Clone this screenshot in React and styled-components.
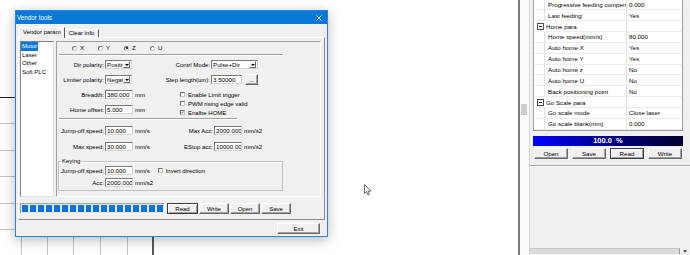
import React from 'react';
import styled, { createGlobalStyle, css } from 'styled-components';

const GlobalStyle = createGlobalStyle`
  html, body { margin: 0; padding: 0; background: #ffffff; }
  body { font-family: "Liberation Sans", Arial, sans-serif; color: #000; }
  * { box-sizing: border-box; }
`;

const Screen = styled.div`
  display: flex;
  width: 690px;
  height: 255px;
  overflow: hidden;
  background: #fff;
`;

const Workspace = styled.div`
  position: relative;
  flex: 1;
  background: #fff;
`;

const CanvasGrid = styled.svg`
  position: absolute;
  left: 0;
  top: 0;
`;

const Cursor = styled.svg`
  position: absolute;
  left: 364px;
  top: 184px;
`;

/* ---------- dialog window ---------- */

const Window = styled.div`
  position: absolute;
  left: 15px;
  top: 10px;
  width: 313px;
  height: 227px;
  display: flex;
  flex-direction: column;
  border: 1px solid #2a86d8;
  background: #f0f0f0;
  box-shadow: 0 3px 12px rgba(0, 0, 0, 0.28);
  font-size: 6px;
`;

const TitleBar = styled.div`
  display: flex;
  align-items: center;
  justify-content: space-between;
  height: 13px;
  padding: 0 5px 0 1px;
  background: #0a78d7;
  color: #fff;
  font-size: 6.3px;
`;

const WindowBody = styled.div`
  flex: 1;
  display: flex;
  flex-direction: column;
  padding: 3px 2px 2px 2px;
`;

const TabStrip = styled.div`
  display: flex;
  align-items: flex-end;
  height: 10px;
  padding-left: 1px;
`;

const Tab = styled.div`
  position: relative;
  height: ${p => (p.$active ? 11 : 8)}px;
  margin-bottom: ${p => (p.$active ? -1 : 0)}px;
  padding: ${p => (p.$active ? '1px 3px 0' : '0 4px 0 3px')};
  line-height: 7px;
  background: #f0f0f0;
  border: 1px solid;
  border-color: #fff #5a5a5a transparent #fff;
  border-bottom: none;
  white-space: nowrap;
  z-index: ${p => (p.$active ? 1 : 0)};
`;

const TabPage = styled.div`
  height: 183px;
  display: flex;
  flex-direction: column;
  padding: 3px 3px 4px 1px;
  border: 1px solid;
  border-color: #fff #8a8a8a #8a8a8a #fff;
`;

const MainArea = styled.div`
  display: flex;
  gap: 2px;
  height: 156px;
`;

const ListBox = styled.div`
  width: 34px;
  background: #fff;
  border: 1px solid;
  border-color: #828282 #e3e3e3 #e3e3e3 #828282;
`;

const ListItem = styled.div`
  width: fit-content;
  padding: 0 1px;
  line-height: 8.5px;
  white-space: nowrap;
  ${p => p.$selected && css`
    background: #0a78d7;
    color: #fff;
  `}
`;

const ParamPanel = styled.div`
  flex: 1;
  display: flex;
  flex-direction: column;
  border: 1px solid;
  border-color: #a0a0a0 #fff #fff #a0a0a0;
`;

const RadioRow = styled.div`
  display: flex;
  align-items: center;
  height: 8px;
  margin: 2px 0 0 15px;
`;

const RadioItem = styled.div`
  display: flex;
  align-items: center;
  gap: 3px;
  width: 26px;
`;

const Sep = styled.div`
  width: ${p => p.$w}px;
  height: 2px;
  margin: ${p => p.$top}px 0 0 2px;
  border-top: 1px solid #a0a0a0;
  border-bottom: 1px solid #fff;
`;

const Section = styled.div`
  display: flex;
  margin-top: 4px;
`;

const Column = styled.div`
  display: flex;
  flex-direction: column;
  gap: 6px;
  width: ${p => (p.$w ? `${p.$w}px` : 'auto')};
`;

const CheckList = styled.div`
  display: flex;
  flex-direction: column;
  margin-left: 20px;
`;

const MotionGrid = styled.div`
  display: grid;
  grid-template-columns: 103px auto;
  row-gap: 7px;
  margin-top: 6px;
`;

const Field = styled.div`
  display: flex;
  align-items: center;
  height: 9px;
  white-space: nowrap;
`;

const Label = styled.span`
  flex: none;
  width: ${p => p.$w}px;
  padding-right: 1px;
  text-align: right;
`;

const Input = styled.div`
  width: ${p => p.$w || 28}px;
  height: 9px;
  padding-left: 1px;
  line-height: 7px;
  font-size: 6.2px;
  background: #fff;
  border: 1px solid;
  border-color: #7a7a7a #d4d4d4 #d4d4d4 #7a7a7a;
  overflow: hidden;
  white-space: nowrap;
`;

const Unit = styled.span`
  margin-left: 2px;
`;

const SelectBox = styled.div`
  display: flex;
  align-items: center;
  width: ${p => p.$w}px;
  height: 9px;
  padding: 0 1px;
  background: #fff;
  border: 1px solid;
  border-color: #7a7a7a #d4d4d4 #d4d4d4 #7a7a7a;
`;

const SelectText = styled.span`
  flex: 1;
  overflow: hidden;
  line-height: 7px;
  font-size: 6.2px;
`;

const DropButton = styled.div`
  display: flex;
  align-items: center;
  justify-content: center;
  width: 7px;
  height: 7px;
  background: #f0f0f0;
  border: 1px solid;
  border-color: #fff #696969 #696969 #fff;
`;

const Arrow = styled.div`
  width: 0;
  height: 0;
  border-left: 2px solid transparent;
  border-right: 2px solid transparent;
  border-top: 2px solid #000;
`;

const CheckRow = styled.div`
  display: flex;
  align-items: center;
  gap: 3px;
  height: 9px;
  margin-left: ${p => p.$indent || 0}px;
  white-space: nowrap;
`;

const CheckBoxIcon = styled.div`
  display: flex;
  align-items: center;
  justify-content: center;
  width: 5px;
  height: 5px;
  background: #fff;
  border: 1px solid;
  border-color: #6d6d6d #c8c8c8 #c8c8c8 #6d6d6d;
`;

const RadioIcon = styled.div`
  display: flex;
  align-items: center;
  justify-content: center;
  width: 5px;
  height: 5px;
  border-radius: 50%;
  background: #fff;
  border: 1px solid;
  border-color: #6d6d6d #d0d0d0 #d0d0d0 #6d6d6d;
  &::after {
    content: '';
    display: ${p => (p.$checked ? 'block' : 'none')};
    width: 2px;
    height: 2px;
    border-radius: 50%;
    background: #000;
  }
`;

const KeyGroup = styled.fieldset`
  width: 225px;
  min-width: 0;
  margin: 7px 0 0 1px;
  padding: 0 0 3px 0;
  border: 1px solid #c0c0c0;
  box-shadow: inset 1px 1px 0 #fff;
`;

const Legend = styled.legend`
  margin-left: 2px;
  padding: 0 1px;
  line-height: 7px;
  font-size: 6px;
`;

const KeyRows = styled.div`
  display: flex;
  flex-direction: column;
  gap: 3px;
  margin-top: 1px;
`;

const ActionRow = styled.div`
  display: flex;
  gap: 1px;
  height: 11px;
  margin-top: 6px;
`;

const SegProgress = styled.div`
  display: flex;
  gap: 2px;
  width: 145px;
  margin-right: 1px;
  padding: 1px;
  background: #e6e6e6;
  border: 1px solid;
  border-color: #a0a0a0 #fff #fff #a0a0a0;
`;

const Segment = styled.div`
  width: 6px;
  background: #0a72d6;
`;

const Button = styled.div`
  display: flex;
  align-items: center;
  justify-content: center;
  width: ${p => p.$w}px;
  height: 11px;
  margin-left: ${p => p.$gap || 0}px;
  background: #f0f0f0;
  font-size: ${p => p.$fs || 6}px;
  border: 1px solid;
  border-color: #fff #696969 #696969 #fff;
  box-shadow: inset -1px -1px 0 #a0a0a0;
  ${p => p.$default && css`
    border-color: #3c3c3c;
    box-shadow: inset 1px 1px 0 #fff, inset -1px -1px 0 #a0a0a0;
  `}
`;

const FooterRow = styled.div`
  display: flex;
  justify-content: flex-end;
  margin-top: 3px;
  padding-right: 5px;
`;

/* ---------- right side panel ---------- */

const SidePanel = styled.div`
  display: flex;
  width: 172px;
  background: #f0f0f0;
`;

const EdgeStrip = styled.div`
  width: 12px;
  padding: 104px 0 0 1px;
  background: #fafafa;
  border-left: 2px solid #7d7d7d;
  border-right: 1px solid #d6d6d6;
`;

const Thumb = styled.div`
  width: 6px;
  height: 11px;
  background: #cdcdcd;
`;

const PanelBody = styled.div`
  flex: 1;
  display: flex;
  flex-direction: column;
  padding: 0 7px 0 3px;
  font-size: 6.2px;
`;

const PropGrid = styled.div`
  margin-top: -0.5px;
  background: #fff;
  border: 1px solid #a0a0a0;
  border-top: none;
`;

const PropRow = styled.div`
  display: grid;
  grid-template-columns: 10px 82px 1fr;
  height: 10.85px;
  border-bottom: 1px solid #ececec;
`;

const Gutter = styled.div`
  display: flex;
  align-items: center;
  justify-content: center;
  padding-left: 2px;
`;

const NameCell = styled.div`
  display: flex;
  align-items: center;
  min-width: 0;
  padding-left: ${p => (p.$group ? 2 : 3)}px;
  border-left: ${p => (p.$group ? 'none' : '1px solid #e2e2e2')};
  overflow: hidden;
  white-space: nowrap;
`;

const ValueCell = styled.div`
  display: flex;
  align-items: center;
  padding-left: 2px;
  border-left: 1px solid #e2e2e2;
  background: #fff;
  overflow: hidden;
  white-space: nowrap;
`;

const MinusBox = styled.div`
  display: flex;
  align-items: center;
  justify-content: center;
  width: 7px;
  height: 7px;
  border: 1px solid #4a4a4a;
  &::after {
    content: '';
    width: 3px;
    height: 1px;
    background: #222;
  }
`;

const PercentBar = styled.div`
  display: flex;
  align-items: center;
  justify-content: center;
  height: 10px;
  margin-top: 5px;
  background: linear-gradient(to right, #0000ff, #00007a 55%, #000030);
  color: #fff;
  font-weight: bold;
  font-size: 7.5px;
  white-space: pre;
`;

const ButtonRow = styled.div`
  display: flex;
  gap: 4px;
  margin-top: 2px;
  padding-left: 1px;
`;

const Etched = styled.div`
  height: 2px;
  margin: 6px -7px 0 -3px;
  border-top: 1px solid #a0a0a0;
  border-bottom: 1px solid #fff;
`;

const Filler = styled.div`
  flex: 1;
`;

const BottomStrip = styled.div`
  display: flex;
  align-items: center;
  height: 6px;
  margin: 0 -7px 1px -3px;
`;

const StripBar = styled.div`
  flex: 1;
  height: 6px;
  background: #dcdcdc;
  border-top: 1px solid #c6c6c6;
  border-right: 1px solid #9a9a9a;
`;

const StripClose = styled.span`
  width: 10px;
  text-align: center;
  font-size: 6px;
  font-weight: bold;
  line-height: 6px;
`;

/* ---------- data ---------- */

const axes = [
  { id: 'X' },
  { id: 'Y' },
  { id: 'Z', checked: true },
  { id: 'U' },
];

const props = [
  { name: 'Progressive feeding compensation', value: '0.000' },
  { name: 'Last feeding', value: 'Yes' },
  { group: 'Home para' },
  { name: 'Home speed(mm/s)', value: '80.000' },
  { name: 'Auto home X', value: 'Yes' },
  { name: 'Auto home Y', value: 'Yes' },
  { name: 'Auto home z', value: 'No' },
  { name: 'Auto home U', value: 'No' },
  { name: 'Back positioning point', value: 'No' },
  { group: 'Go Scale para' },
  { name: 'Go scale mode', value: 'Close laser' },
  { name: 'Go scale blank(mm)', value: '0.000' },
];

function Select({ w, value }) {
  return (
    <SelectBox $w={w}>
      <SelectText>{value}</SelectText>
      <DropButton><Arrow /></DropButton>
    </SelectBox>
  );
}

function Check({ label, checked, indent }) {
  return (
    <CheckRow $indent={indent}>
      <CheckBoxIcon>
        {checked && (
          <svg width="5" height="5" viewBox="0 0 5 5">
            <polyline points="0.6,2.4 1.9,3.8 4.4,0.8" fill="none" stroke="#000" strokeWidth="1" />
          </svg>
        )}
      </CheckBoxIcon>
      <span>{label}</span>
    </CheckRow>
  );
}

function Grid() {
  const vx = [21, 47, 73, 100, 127];
  const hy = [123, 150, 176, 203, 229];
  return (
    <CanvasGrid width="518" height="255">
      {vx.map(x => <line key={x} x1={x + 0.5} y1="97" x2={x + 0.5} y2="255" stroke="#c4c4c4" />)}
      {hy.map(y => <line key={y} x1="0" y1={y + 0.5} x2="153" y2={y + 0.5} stroke="#c4c4c4" />)}
      <line x1="0" y1="97.5" x2="153" y2="97.5" stroke="#222" />
      <line x1="153" y1="97" x2="153" y2="255" stroke="#222" strokeWidth="1.5" />
    </CanvasGrid>
  );
}

function VendorDialog() {
  return (
    <Window>
      <TitleBar>
        <span>Vendor tools</span>
        <svg width="6" height="6" viewBox="0 0 6 6">
          <path d="M0.5 0.5 L5.5 5.5 M5.5 0.5 L0.5 5.5" stroke="#fff" strokeWidth="0.9" />
        </svg>
      </TitleBar>
      <WindowBody>
        <TabStrip>
          <Tab $active>Vendor param</Tab>
          <Tab>Clear info</Tab>
        </TabStrip>
        <TabPage>
          <MainArea>
            <ListBox>
              <ListItem $selected>Motor</ListItem>
              <ListItem>Laser</ListItem>
              <ListItem>Other</ListItem>
              <ListItem>Soft PLC</ListItem>
            </ListBox>
            <ParamPanel>
              <RadioRow>
                {axes.map(a => (
                  <RadioItem key={a.id}>
                    <RadioIcon $checked={a.checked} />
                    <span>{a.id}</span>
                  </RadioItem>
                ))}
              </RadioRow>
              <Sep $w={224} $top={2} />
              <Section>
                <Column $w={103}>
                  <Field><Label $w={48}>Dir polarity:</Label><Select w={27} value="Positive" /></Field>
                  <Field><Label $w={48}>Limiter polarity:</Label><Select w={27} value="Negative" /></Field>
                  <Field><Label $w={48}>Breadth:</Label><Input>380.000</Input><Unit>mm</Unit></Field>
                  <Field><Label $w={48}>Home offset:</Label><Input>5.000</Input><Unit>mm</Unit></Field>
                </Column>
                <Column>
                  <Field><Label $w={51}>Contrl Mode:</Label><Select w={47} value="Pulse+Dir" /></Field>
                  <Field>
                    <Label $w={51}>Step length(um):</Label>
                    <Input $w={31}>3.50000</Input>
                    <Button $w={13} $gap={3}>...</Button>
                  </Field>
                  <CheckList>
                    <Check label="Enable Limit trigger" />
                    <Check label="PWM rising edge valid" />
                    <Check label="Enalbe HOME" checked />
                  </CheckList>
                </Column>
              </Section>
              <Sep $w={178} $top={1} />
              <MotionGrid>
                <Field><Label $w={48}>Jump-off speed:</Label><Input>10.000</Input><Unit>mm/s</Unit></Field>
                <Field><Label $w={54}>Max Acc:</Label><Input>2000.000</Input><Unit>mm/s2</Unit></Field>
                <Field><Label $w={48}>Max speed:</Label><Input>30.000</Input><Unit>mm/s</Unit></Field>
                <Field><Label $w={54}>EStop acc:</Label><Input>10000.000</Input><Unit>mm/s2</Unit></Field>
              </MotionGrid>
              <KeyGroup>
                <Legend>Keying</Legend>
                <KeyRows>
                  <Field>
                    <Label $w={46}>Jump-off speed:</Label><Input>10.000</Input><Unit>mm/s</Unit>
                    <Check label="Invert direction" indent={8} />
                  </Field>
                  <Field><Label $w={46}>Acc:</Label><Input>2000.000</Input><Unit>mm/s2</Unit></Field>
                </KeyRows>
              </KeyGroup>
            </ParamPanel>
          </MainArea>
          <ActionRow>
            <SegProgress>
              {Array.from({ length: 18 }, (_, i) => <Segment key={i} />)}
            </SegProgress>
            <Button $w={31} $default>Read</Button>
            <Button $w={30}>Write</Button>
            <Button $w={30}>Open</Button>
            <Button $w={30}>Save</Button>
          </ActionRow>
        </TabPage>
        <FooterRow>
          <Button $w={43}>Exit</Button>
        </FooterRow>
      </WindowBody>
    </Window>
  );
}

function PropertyPanel() {
  return (
    <SidePanel>
      <EdgeStrip><Thumb /></EdgeStrip>
      <PanelBody>
        <PropGrid>
          {props.map((p, i) =>
            p.group ? (
              <PropRow key={i}>
                <Gutter><MinusBox /></Gutter>
                <NameCell $group>{p.group}</NameCell>
                <ValueCell />
              </PropRow>
            ) : (
              <PropRow key={i}>
                <Gutter />
                <NameCell>{p.name}</NameCell>
                <ValueCell>{p.value}</ValueCell>
              </PropRow>
            )
          )}
        </PropGrid>
        <PercentBar>{'100.0  %'}</PercentBar>
        <ButtonRow>
          <Button $w={34} $fs={6.2}>Open</Button>
          <Button $w={34} $fs={6.2}>Save</Button>
          <Button $w={34} $fs={6.2} $default>Read</Button>
          <Button $w={34} $fs={6.2}>Write</Button>
        </ButtonRow>
        <Etched />
        <Filler />
        <BottomStrip>
          <StripBar />
          <StripClose>×</StripClose>
        </BottomStrip>
      </PanelBody>
    </SidePanel>
  );
}

export default function App() {
  return (
    <>
      <GlobalStyle />
      <Screen>
        <Workspace>
          <Grid />
          <VendorDialog />
          <Cursor width="8" height="12" viewBox="0 0 8 12">
            <path d="M0.5 0.5 L0.5 9.5 L2.6 7.6 L4.1 11 L5.5 10.4 L4.1 7.1 L6.9 7.1 Z" fill="#fff" stroke="#444" strokeWidth="0.8" />
          </Cursor>
        </Workspace>
        <PropertyPanel />
      </Screen>
    </>
  );
}
